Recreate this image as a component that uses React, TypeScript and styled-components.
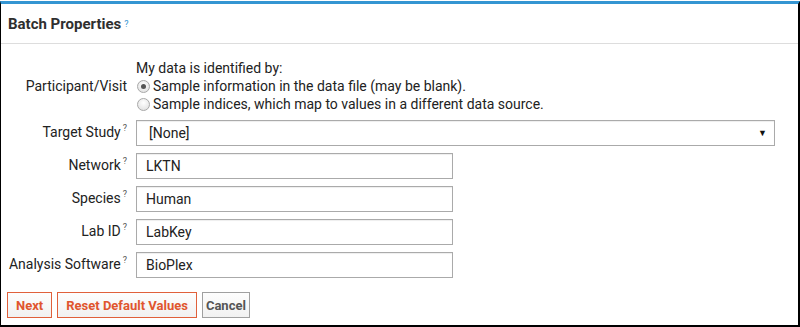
import { Fragment } from 'react'
import styled, { createGlobalStyle } from 'styled-components'

const GlobalStyle = createGlobalStyle`
  html, body {
    margin: 0;
    padding: 0;
    background: #fff;
  }
  body {
    font-family: Roboto, "Liberation Sans", Arial, sans-serif;
    color: #222;
  }
`

const Frame = styled.div`
  box-sizing: border-box;
  width: 800px;
  height: 326px;
  margin-top: 1px;
  border-top: 3px solid #3495d2;
  border-left: 1px solid #000;
  border-right: 2px solid #000;
  border-bottom: 2px solid #000;
  display: flex;
  flex-direction: column;
`

const Header = styled.div`
  height: 39px;
  border-bottom: 1px solid #ddd;
  padding-left: 7px;
  display: flex;
  align-items: center;
  font-size: 15px;
  font-weight: 700;
  color: #2f2f2f;
`

const Help = styled.span`
  color: #3495d2;
  font-size: 9px;
  font-weight: 400;
  margin-left: 3px;
  line-height: 0;
  vertical-align: 7px;
`

const Body = styled.div`
  padding: 14px 0 0 0;
  display: flex;
  flex-direction: column;
`

const FormGrid = styled.div`
  display: grid;
  grid-template-columns: 126px 1fr;
  column-gap: 9px;
  row-gap: 7px;
  align-items: center;
  padding-right: 23px;
`

const Label = styled.div<{ $plain?: boolean }>`
  text-align: right;
  font-size: 14px;
  line-height: 18px;
  padding-bottom: ${p => (p.$plain ? '0' : '2px')};
  color: #222;
  white-space: nowrap;
`

const LabelHelp = styled.span`
  font-size: 9px;
  color: #555;
  margin-left: 2px;
  line-height: 0;
  vertical-align: 6px;
`

const Stack = styled.div`
  display: flex;
  flex-direction: column;
  font-size: 14px;
  line-height: 18px;
  padding-top: 1px;
`

const RadioRow = styled.label`
  display: flex;
  align-items: center;
  gap: 3px;
`

const Radio = styled.span<{ $checked?: boolean }>`
  box-sizing: border-box;
  width: 13px;
  height: 13px;
  border-radius: 50%;
  border: 1px solid #a8a8a8;
  background: radial-gradient(circle at 50% 35%, #fff, #dcdcdc);
  display: inline-flex;
  align-items: center;
  justify-content: center;
  margin-left: 1px;
  &::after {
    content: '';
    width: 5px;
    height: 5px;
    border-radius: 50%;
    background: ${p => (p.$checked ? '#555' : 'transparent')};
  }
`

const Field = styled.div<{ $wide?: boolean }>`
  box-sizing: border-box;
  height: 26px;
  width: ${p => (p.$wide ? '639px' : '317px')};
  border: 1px solid #aaa;
  box-shadow: inset 0 1px 1px #eee;
  background: #fff;
  display: flex;
  align-items: center;
  justify-content: space-between;
  padding: 0 7px 0 ${p => (p.$wide ? '12px' : '9px')};
  font-size: 14px;
  color: #222;
`

const Arrow = styled.span`
  font-size: 9px;
  color: #111;
`

const Buttons = styled.div`
  display: flex;
  gap: 5px;
  padding: 14px 0 0 6px;
`

const Button = styled.button<{ $primary?: boolean }>`
  height: 26px;
  padding: ${p => (p.$primary ? '0 8px' : '0 3px')};
  font-family: Roboto, "Liberation Sans", Arial, sans-serif;
  font-size: 13px;
  font-weight: 700;
  border: 1px solid ${p => (p.$primary ? '#e0603b' : '#a0a0a0')};
  color: ${p => (p.$primary ? '#e0552e' : '#555')};
  background: linear-gradient(180deg, #fdfdfd, #f1f1f1);
  border-radius: 0;
`

const fields = [
  { label: 'Network', value: 'LKTN' },
  { label: 'Species', value: 'Human' },
  { label: 'Lab ID', value: 'LabKey' },
  { label: 'Analysis Software', value: 'BioPlex' },
]

export default function App() {
  return (
    <>
      <GlobalStyle />
      <Frame>
        <Header>
          Batch Properties<Help>?</Help>
        </Header>
        <Body>
          <FormGrid>
            <Label $plain>Participant/Visit</Label>
            <Stack>
              <span>My data is identified by:</span>
              <RadioRow>
                <Radio $checked />
                Sample information in the data file (may be blank).
              </RadioRow>
              <RadioRow>
                <Radio />
                Sample indices, which map to values in a different data source.
              </RadioRow>
            </Stack>
            <Label>
              Target Study<LabelHelp>?</LabelHelp>
            </Label>
            <Field $wide>
              [None]
              <Arrow>▼</Arrow>
            </Field>
            {fields.map(f => (
              <Fragment key={f.label}>
                <Label>
                  {f.label}
                  <LabelHelp>?</LabelHelp>
                </Label>
                <Field>{f.value}</Field>
              </Fragment>
            ))}
          </FormGrid>
          <Buttons>
            <Button $primary>Next</Button>
            <Button $primary>Reset Default Values</Button>
            <Button>Cancel</Button>
          </Buttons>
        </Body>
      </Frame>
    </>
  )
}
